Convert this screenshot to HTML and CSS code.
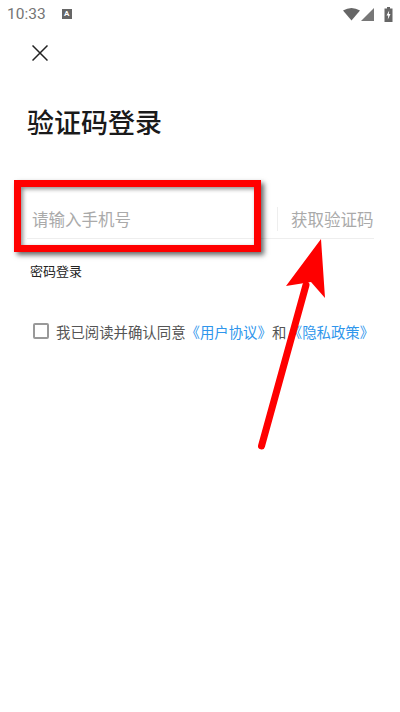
FILE: index.html
```html
<!DOCTYPE html>
<html>
	<head>
		<meta charset="UTF-8">
		<title>验证码登录</title>
		<link rel="stylesheet" href="styles.css">
	</head>
	<body>
		<div class="page">
			<div class="status">
				<span class="time">10:33</span>
				<span class="badge">A</span>
				<span class="status-right">
					<svg width="17" height="14" viewBox="0 0 17 14"><path d="M0 3.500Q8.500-1.500 17 3.500L8.500 13.500Z" fill="#666"/></svg>
					<svg width="14" height="14" viewBox="0 0 14 14"><path d="M13 1V14H0Z" fill="#777"/></svg>
					<svg class="battery" width="9" height="15" viewBox="0 0 9 15"><path d="M3 0H6V1.500H8.500V15H.5V1.500H3Z" fill="#666"/><path d="M5.200 3.500L2.500 8.500H4.200L3.800 12.500L6.500 7H4.800Z" fill="#fff"/></svg>
				</span>
			</div>

			<div class="close">
				<svg width="16" height="16" viewBox="0 0 16 16"><path d="M.5.500L15.500 15.500M15.500.500L.5 15.500" stroke="#222" stroke-width="1.500" fill="none"/></svg>
			</div>

			<h1 class="title">验证码登录</h1>

			<div class="phone-row">
				<span class="phone-input">请输入手机号</span>
				<span class="get-code">获取验证码</span>
			</div>

			<div class="pwd-login">密码登录</div>

			<div class="agree">
				<span class="check"></span>
				<span class="agree-text">我已阅读并确认同意<a class="link">《用户协议》</a>和<a class="link">《隐私政策》</a></span>
			</div>

			<!-- 标注 -->
			<div class="mark-box"></div>
			<svg class="mark-arrow" width="400" height="712" viewBox="0 0 400 712">
				<path d="M261.500 446L306 285" stroke="#f00" stroke-width="7" stroke-linecap="round" fill="none"/>
				<path d="M321 239L286 286L311 282L325 298Z" fill="#f00"/>
			</svg>
		</div>
	</body>
</html>
```

FILE: styles.css
```css
*{
	margin: 0;
	padding: 0;
	box-sizing: border-box;
}
html,body{
	height: 100%;
	background: #fff;
}
body{
	font-family: "Noto Sans CJK SC", "Liberation Sans", sans-serif;
	overflow: hidden;
}
.page{
	width: 400px;
	height: 712px;
	position: relative;
	overflow: hidden;
}
.status{
	height: 28px;
	padding: 0 3px 0 7px;
	display: flex;
	align-items: center;
	color: #757575;
}
.time{
	font-family: Roboto, sans-serif;
	font-size: 15.5px;
	line-height: 28px;
}
.badge{
	width: 10px;
	height: 10px;
	margin-left: 16px;
	background: #666;
	color: #fff;
	font-family: Roboto, sans-serif;
	font-size: 8px;
	font-weight: 700;
	line-height: 10px;
	text-align: center;
}
.status-right{
	margin-left: auto;
	display: flex;
	align-items: center;
	gap: 1px;
}
.battery{
	margin-left: 8px;
	margin-right: 4px;
}
.close{
	height: 16px;
	margin: 17px 0 0 32px;
}
.close svg{
	display: block;
}
.title{
	margin: 41px 0 0 27px;
	font-size: 27px;
	line-height: 40px;
	font-weight: 500;
	color: #1a1a1a;
}
.phone-row{
	width: 347px;
	height: 40px;
	margin: 57px 0 0 27px;
	padding-left: 5px;
	border-bottom: 1px solid #eee;
	display: flex;
	align-items: center;
	font-size: 16.5px;
	color: #aaa;
}
.phone-input{
	width: 245px;
}
.get-code{
	height: 24px;
	line-height: 24px;
	padding-left: 13px;
	border-left: 1px solid #eee;
	white-space: nowrap;
}
.pwd-login{
	margin: 23px 0 0 30px;
	font-size: 13px;
	line-height: 18px;
	color: #222;
}
.agree{
	margin: 41px 0 0 33px;
	display: flex;
	align-items: center;
	height: 20px;
}
.check{
	width: 16px;
	height: 16px;
	border: 2px solid #999;
	border-radius: 2px;
	flex: none;
}
.agree-text{
	margin-left: 7px;
	font-size: 14.4px;
	color: #555;
	white-space: nowrap;
}
.link{
	color: #2f96ec;
}
.link + .link{
	margin-left: 1.500px;
}
.mark-box{
	position: absolute;
	left: 14px;
	top: 180px;
	width: 247px;
	height: 72px;
	border: 7px solid #f00;
	box-shadow: 3px 3px 5px rgba(0,0,0,.6), inset 2px 2px 4px rgba(0,0,0,.45);
}
.mark-arrow{
	position: absolute;
	left: 0;
	top: 0;
}
```
